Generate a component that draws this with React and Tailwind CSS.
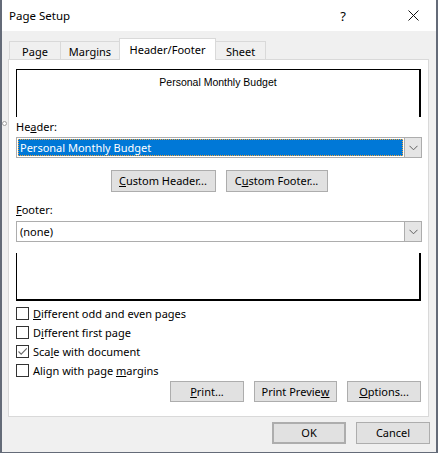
import React from "react";

function Btn({ children, className = "" }) {
  return (
    <div
      className={`flex items-center justify-center bg-[#e1e1e1] border border-[#adadad] text-[11px] text-black ${className}`}
    >
      {children}
    </div>
  );
}

function Chevron() {
  return (
    <svg width="9" height="6" viewBox="0 0 9 6">
      <path d="M0.5 0.8 L4.5 4.8 L8.5 0.8" fill="none" stroke="#606060" strokeWidth="1" />
    </svg>
  );
}

function Select({ selected, children }) {
  return (
    <div className="flex h-[21px] border border-[#adadad] bg-white">
      <div className="flex flex-1 p-[1px]">
        {selected ? (
          <div className="flex flex-1 items-center bg-[#0078d7] text-white border border-dotted border-[#f0a23a] pl-[1px] text-[11px]">
            {children}
          </div>
        ) : (
          <div className="flex flex-1 items-center pl-[2px] text-[11px]">{children}</div>
        )}
      </div>
      <div className="flex w-[17px] items-center justify-center bg-[#e5e5e5] border-l border-[#adadad]">
        <Chevron />
      </div>
    </div>
  );
}

function Check({ checked, children }) {
  return (
    <div className="flex h-[19px] items-center">
      <div className="flex h-[13px] w-[13px] items-center justify-center border border-[#333333] bg-white">
        {checked && (
          <svg width="11" height="11" viewBox="0 0 11 11">
            <path d="M1.5 5.5 L4.2 8.2 L9.8 2.4" fill="none" stroke="#6a6a6a" strokeWidth="1.1" />
          </svg>
        )}
      </div>
      <span className="ml-[4px] text-[11px]">{children}</span>
    </div>
  );
}

function Tab({ children, className = "", active }) {
  if (active) {
    return (
      <div
        className={`relative z-10 -mb-px flex h-[22px] items-start justify-center border-x border-t border-[#d9d9d9] bg-white pt-[3px] text-[11px] ${className}`}
      >
        {children}
      </div>
    );
  }
  return (
    <div
      className={`flex h-[18px] items-start justify-center border-t border-[#d9d9d9] bg-[#f0f0f0] pt-[2px] text-[11px] ${className}`}
    >
      {children}
    </div>
  );
}

export default function App() {
  return (
    <div className="relative flex h-[453px] w-[438px] flex-col overflow-hidden border-x-2 border-b border-[#646b78] bg-[#f0f0f0] font-['Noto_Sans',sans-serif] text-black leading-[16px]">
      {/* title bar */}
      <div className="flex h-[31px] shrink-0 items-center bg-white pl-[7px]">
        <span className="text-[11.5px]">Page Setup</span>
        <span className="ml-auto mr-[62px] text-[13px]">?</span>
        <svg className="mr-[17px]" width="11" height="11" viewBox="0 0 11 11">
          <path d="M0.5 0.5 L10.5 10.5 M10.5 0.5 L0.5 10.5" stroke="#111" strokeWidth="1" />
        </svg>
      </div>

      {/* tabs */}
      <div className="ml-[7px] mt-[7px] flex h-[21px] items-end">
        <Tab className="w-[51px] border-l">Page</Tab>
        <Tab className="w-[59px] border-l">Margins</Tab>
        <Tab active className="w-[97px]">
          Header/Footer
        </Tab>
        <Tab className="w-[50px] border-r">Sheet</Tab>
      </div>

      {/* panel */}
      <div className="ml-[6px] flex h-[358px] w-[421px] flex-col border border-[#d9d9d9] bg-white pl-[7px] pr-[6px]">
        <div className="mt-[9px] flex h-[48px] w-[405px] justify-center border-l border-t border-r-2 border-black pt-[5px]">
          <span className="font-['Liberation_Sans',sans-serif] text-[10.5px] leading-[14px]">
            Personal Monthly Budget
          </span>
        </div>

        <div className="mt-[2px] text-[11px]">
          He<span className="underline">a</span>der:
        </div>
        <div className="mt-[2px]">
          <Select selected>Personal Monthly Budget</Select>
        </div>

        <div className="mt-[12px] flex justify-center gap-[10px]">
          <Btn className="h-[22px] w-[105px]">
            <span className="underline">C</span>ustom Header...
          </Btn>
          <Btn className="h-[22px] w-[102px]">
            C<span className="underline">u</span>stom Footer...
          </Btn>
        </div>

        <div className="mt-[10px] text-[11px]">
          <span className="underline">F</span>ooter:
        </div>
        <div className="mt-[3px]">
          <Select>(none)</Select>
        </div>

        <div className="mt-[11px] h-[48px] w-[405px] border-l border-b-2 border-r-2 border-black"></div>

        <div className="mt-[3px] flex flex-col">
          <Check>
            <span className="underline">D</span>ifferent odd and even pages
          </Check>
          <Check>
            D<span className="underline">i</span>fferent first page
          </Check>
          <Check checked>
            Sca<span className="underline">l</span>e with document
          </Check>
          <Check>
            Align with page <span className="underline">m</span>argins
          </Check>
        </div>

        <div className="mr-[1px] mt-[1px] flex justify-end gap-[10px]">
          <Btn className="h-[21px] w-[74px]">
            <span className="underline">P</span>rint...
          </Btn>
          <Btn className="h-[21px] w-[83px]">
            Print Previe<span className="underline">w</span>
          </Btn>
          <Btn className="h-[21px] w-[74px]">
            <span className="underline">O</span>ptions...
          </Btn>
        </div>
      </div>

      {/* dialog buttons */}
      <div className="mr-[6px] mt-[5px] flex justify-end gap-[10px]">
        <Btn className="h-[22px] w-[74px] border-2 border-[#0078d7]">OK</Btn>
        <Btn className="h-[22px] w-[74px]">Cancel</Btn>
      </div>

      <div className="absolute left-0 top-[121px] h-[5px] w-[5px] rounded-full border border-[#a0a0a0] bg-white"></div>
    </div>
  );
}
